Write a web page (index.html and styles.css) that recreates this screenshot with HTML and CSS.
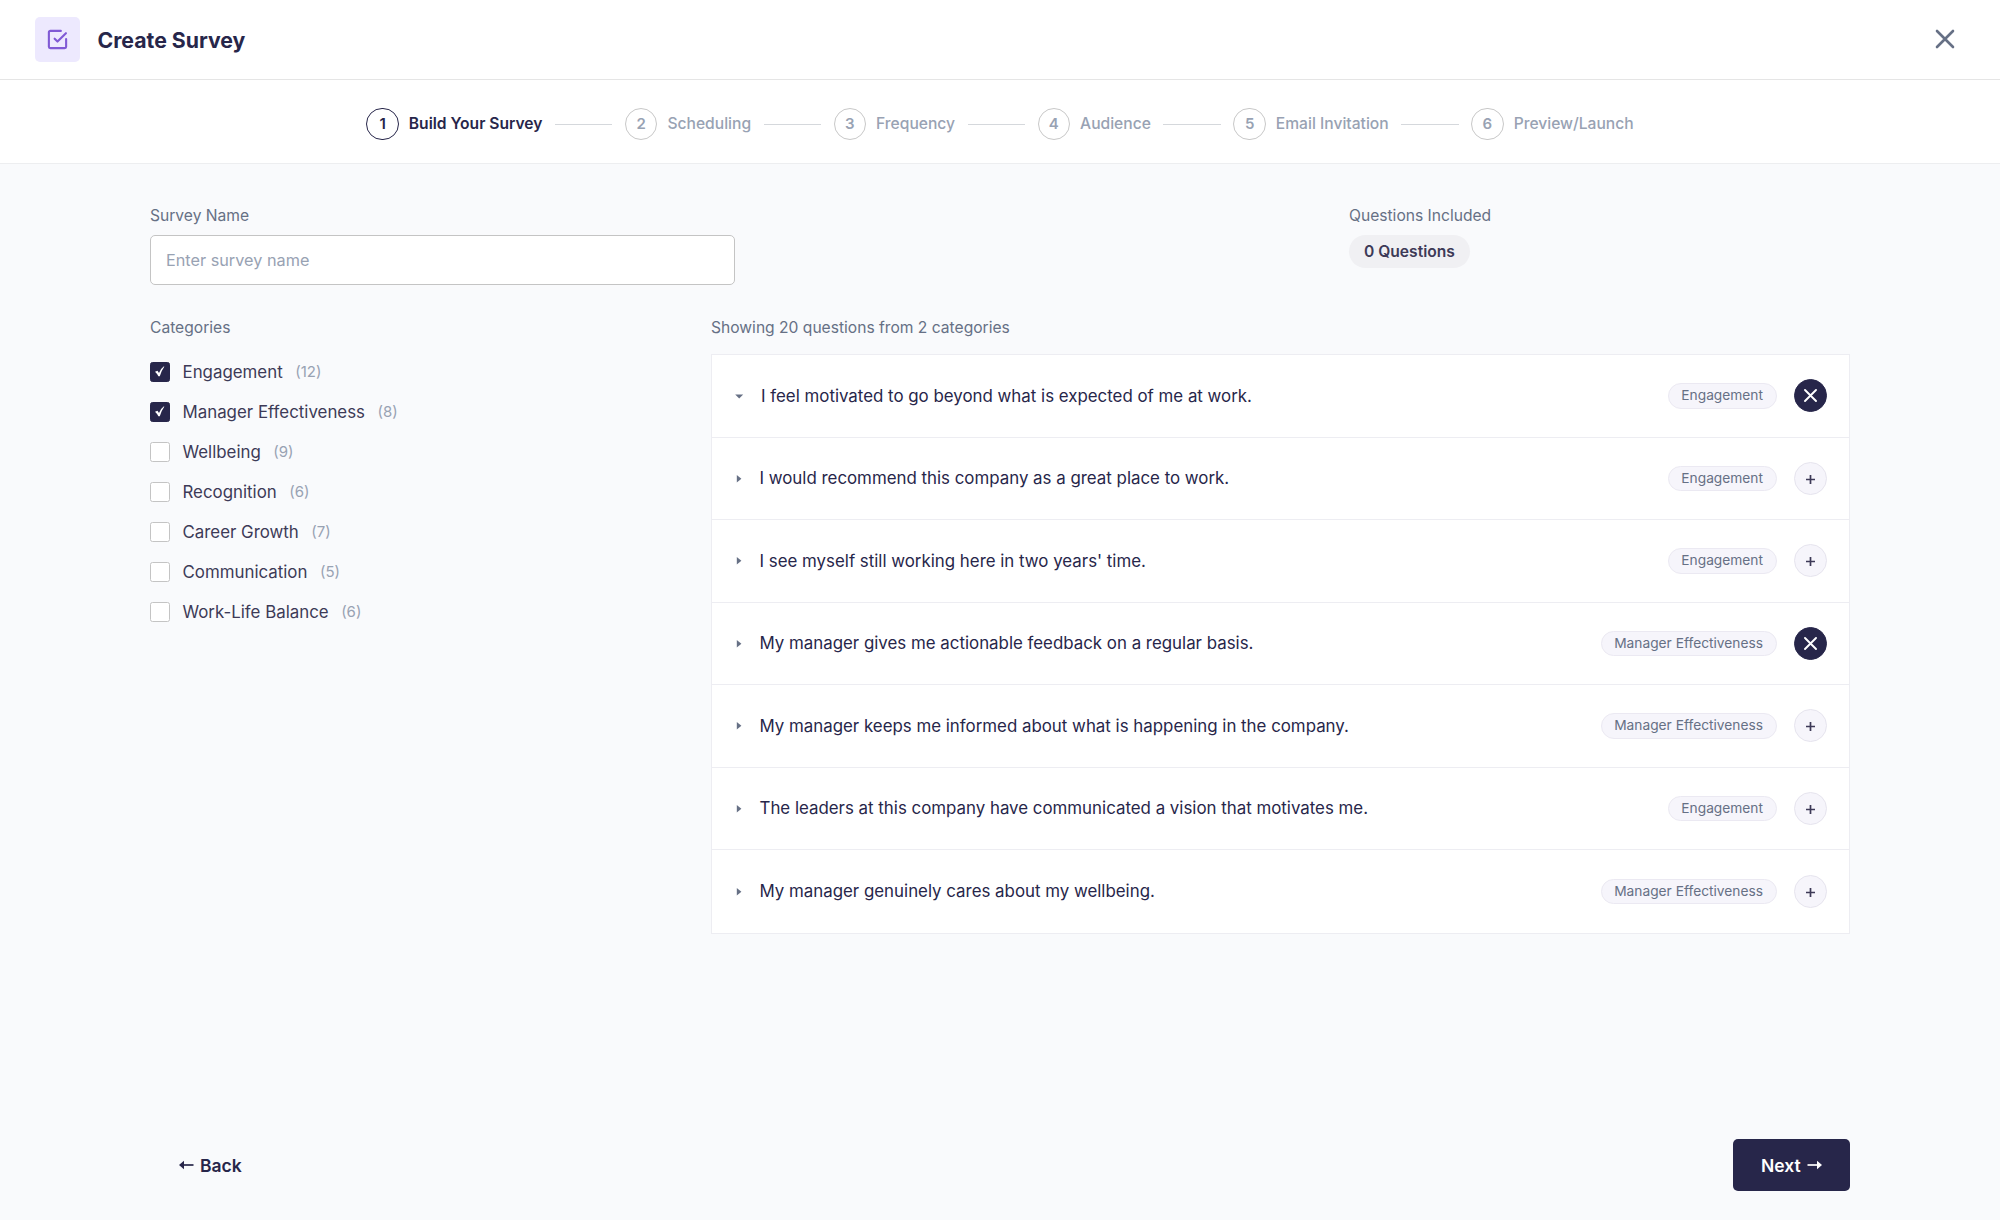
FILE: index.html
```html
<!DOCTYPE html>
<html lang="en">
<head>
<meta charset="UTF-8">
<meta name="viewport" content="width=device-width, initial-scale=1.0">
<title>Create Survey</title>
<link rel="stylesheet" href="styles.css">
</head>
<body>
<header class="header">
    <div class="header-icon">
        <svg width="23" height="23" viewBox="0 0 24 24" fill="none" stroke="currentColor" stroke-width="2.2" stroke-linecap="round" stroke-linejoin="round">
            <path d="M9 11.2l3 3L20.8 5.4"/>
            <path d="M21 11.5v8a1.5 1.5 0 0 1-1.5 1.5h-15A1.5 1.5 0 0 1 3 19.5v-15A1.5 1.5 0 0 1 4.5 3h11"/>
        </svg>
    </div>
    <h1 class="title">Create Survey</h1>
    <button class="close" aria-label="Close">
        <svg width="20" height="20" viewBox="0 0 20 20" fill="none" stroke="currentColor" stroke-width="2.6" stroke-linecap="round"><path d="M2 2l16 16M18 2L2 18"/></svg>
    </button>
</header>

<nav class="steps">
    <div class="step active"><span class="step-number">1</span><span class="step-name">Build Your Survey</span></div>
    <div class="step-line"></div>
    <div class="step"><span class="step-number">2</span><span class="step-name">Scheduling</span></div>
    <div class="step-line"></div>
    <div class="step"><span class="step-number">3</span><span class="step-name">Frequency</span></div>
    <div class="step-line"></div>
    <div class="step"><span class="step-number">4</span><span class="step-name">Audience</span></div>
    <div class="step-line"></div>
    <div class="step"><span class="step-number">5</span><span class="step-name">Email Invitation</span></div>
    <div class="step-line"></div>
    <div class="step"><span class="step-number">6</span><span class="step-name">Preview/Launch</span></div>
</nav>

<main class="content">
    <div class="top-row">
        <div class="field">
            <label class="label" for="surveyName">Survey Name</label>
            <input class="input" type="text" id="surveyName" placeholder="Enter survey name">
        </div>
        <div class="included">
            <div class="label">Questions Included</div>
            <span class="included-count">0 Questions</span>
        </div>
    </div>

    <div class="columns">
        <aside class="sidebar">
            <div class="label">Categories</div>
            <div class="categories" id="categories"></div>
        </aside>
        <section class="questions-column">
            <div class="label">Showing 20 questions from 2 categories</div>
            <div class="questions" id="questions"></div>
        </section>
    </div>
</main>

<footer class="footer">
    <button class="button back">
        <svg width="15" height="10" viewBox="0 0 15 10"><path d="M4 5h10.5" stroke="currentColor" stroke-width="1.7"/><path d="M0 5l5-4.2v8.4z" fill="currentColor"/></svg>
        Back
    </button>
    <button class="button next">
        Next
        <svg width="15" height="10" viewBox="0 0 15 10"><path d="M.5 5H11" stroke="currentColor" stroke-width="1.7"/><path d="M15 5l-5-4.200v8.400z" fill="currentColor"/></svg>
    </button>
</footer>

<script src="script.js"></script>
</body>
</html>
```

FILE: styles.css
```css
* {
    box-sizing: border-box;
}

body {
    margin: 0;
    height: 100vh;
    display: flex;
    flex-direction: column;
    font-family: Inter, "Liberation Sans", sans-serif;
    font-size: 16.875px;
    color: #27264a;
    background-color: #f9fafc;
}

button {
    font-family: inherit;
    border: none;
    padding: 0;
    cursor: pointer;
}

.header {
    display: flex;
    align-items: center;
    height: 80px;
    padding: 0 45px 1px 35px;
    background-color: #fff;
    border-bottom: 1px solid #e5e5e5;
}

.header-icon {
    display: flex;
    align-items: center;
    justify-content: center;
    width: 45px;
    height: 45px;
    border-radius: 5px;
    background-color: #ede9fe;
    color: #805ad5;
}

.title {
    margin: 2px 0 0 17.5px;
    font-size: 21.25px;
    font-weight: 700;
}

.close {
    display: flex;
    margin-left: auto;
    background: none;
    color: #667085;
}

.steps {
    display: flex;
    align-items: center;
    justify-content: center;
    gap: 12.5px;
    height: 84px;
    padding-top: 5px;
    background-color: #fff;
    border-bottom: 1px solid #edeef0;
}

.step {
    display: flex;
    align-items: center;
    gap: 10px;
    font-size: 15.625px;
    font-weight: 500;
    color: #98a2b3;
}

.step-number {
    display: flex;
    align-items: center;
    justify-content: center;
    width: 32.5px;
    height: 32.5px;
    padding-bottom: 1px;
    border: 1px solid #c8c8c8;
    border-radius: 50%;
    font-size: 15px;
    font-weight: 600;
}

.step-name {
    padding-bottom: 1px;
}

.step.active {
    font-weight: 600;
    color: #27264a;
}

.step.active .step-number {
    border-color: #27264a;
}

.step-line {
    width: 57.5px;
    height: 1px;
    background-color: #d5d8dc;
}

.content {
    padding: 42px 150px 0;
}

.label {
    display: block;
    font-size: 15.625px;
    line-height: 20px;
    color: #667085;
}

.top-row {
    display: flex;
    justify-content: space-between;
}

.field {
    width: 585px;
}

.input {
    display: block;
    width: 100%;
    height: 50px;
    margin-top: 9px;
    padding: 0 15px;
    border: 1px solid #c4c4c4;
    border-radius: 5px;
    background-color: #fff;
    font-family: inherit;
    font-size: 16.25px;
}

.input::placeholder {
    color: #98a2b3;
}

.included {
    width: 501px;
}

.included-count {
    display: inline-block;
    margin-top: 9px;
    padding: 0 15px;
    border-radius: 17px;
    background-color: #f0f0f3;
    font-size: 15.625px;
    font-weight: 600;
    line-height: 33px;
    color: #3d3a57;
}

.columns {
    display: flex;
    margin-top: 33px;
}

.sidebar {
    width: 561px;
}

.categories {
    display: flex;
    flex-direction: column;
    gap: 20px;
    margin-top: 24px;
}

.category {
    display: flex;
    align-items: center;
    height: 20px;
    color: #3d3a57;
}

.checkbox {
    display: flex;
    align-items: center;
    justify-content: center;
    width: 20px;
    height: 20px;
    margin-right: 12.5px;
    border: 1px solid #c4c4c4;
    border-radius: 2.5px;
    background-color: #fff;
}

.checkbox svg {
    flex-shrink: 0;
}

.checkbox.checked {
    border-color: #27264a;
    background-color: #27264a;
    color: #fff;
}

.category-count {
    margin-left: 12.5px;
    padding-bottom: 1px;
    font-size: 15px;
    color: #98a2b3;
}

.questions-column {
    flex: 1;
}

.questions {
    margin-top: 16px;
    border: 1px solid #ededf2;
    background-color: #fff;
}

.question {
    display: flex;
    align-items: center;
    height: 82.5px;
    padding: 0 22.5px;
    border-bottom: 1px solid #ededf2;
}

.question:last-child {
    border-bottom: none;
}

.arrow {
    width: 9px;
    height: 9px;
    margin-right: 16px;
    color: #667085;
}

.arrow.open {
    margin-right: 17.5px;
}

.question-text {
    flex: 1;
}

.tag {
    padding: 0 12.5px;
    border: 1px solid #ebe9f2;
    border-radius: 13px;
    background-color: #f6f5fb;
    font-size: 13.75px;
    line-height: 23.5px;
    color: #667085;
}

.toggle {
    display: flex;
    align-items: center;
    justify-content: center;
    width: 33px;
    height: 33px;
    margin-left: 17px;
    padding-top: 2px;
    border: 1px solid #e6e4ee;
    border-radius: 50%;
    background-color: #f6f5fb;
    color: #3d3a57;
}

.toggle.selected {
    padding-top: 0;
    border-color: #27264a;
    background-color: #27264a;
    color: #fff;
}

.footer {
    display: flex;
    align-items: center;
    justify-content: space-between;
    margin-top: auto;
    padding: 0 150px 29px;
}

.button {
    display: flex;
    align-items: center;
    gap: 6px;
    height: 52px;
    padding: 0 28px 0 29px;
    border-radius: 5px;
    font-size: 17.5px;
    font-weight: 600;
}

.back {
    background: none;
    color: #27264a;
}

.next {
    width: 117px;
    padding: 0 28px;
    background-color: #27264a;
    color: #fff;
}
```

FILE: script.js
```js
const categories = [
    { name: 'Engagement', count: 12, checked: true },
    { name: 'Manager Effectiveness', count: 8, checked: true },
    { name: 'Wellbeing', count: 9 },
    { name: 'Recognition', count: 6 },
    { name: 'Career Growth', count: 7 },
    { name: 'Communication', count: 5 },
    { name: 'Work-Life Balance', count: 6 }
];

const questions = [
    { text: 'I feel motivated to go beyond what is expected of me at work.', tag: 'Engagement', open: true, selected: true },
    { text: 'I would recommend this company as a great place to work.', tag: 'Engagement' },
    { text: "I see myself still working here in two years' time.", tag: 'Engagement' },
    { text: 'My manager gives me actionable feedback on a regular basis.', tag: 'Manager Effectiveness', selected: true },
    { text: 'My manager keeps me informed about what is happening in the company.', tag: 'Manager Effectiveness' },
    { text: 'The leaders at this company have communicated a vision that motivates me.', tag: 'Engagement' },
    { text: 'My manager genuinely cares about my wellbeing.', tag: 'Manager Effectiveness' }
];

const checkIcon = '<svg width="20" height="20" viewBox="0 0 20 20"><path d="M5 9.8L7.5 8.8L9 11Q10.8 6.4 14.2 4L14 5.2Q11.2 8.8 9.8 14.3H8.4Q7 11.6 5 9.8Z" fill="currentColor"/></svg>';
const crossIcon = '<svg width="13" height="13" viewBox="0 0 13 13" fill="none" stroke="currentColor" stroke-width="1.9" stroke-linecap="round"><path d="M1 1l11 11M12 1L1 12"/></svg>';
const plusIcon = '<svg width="9" height="9" viewBox="0 0 9 9" fill="none" stroke="currentColor" stroke-width="1.7"><path d="M4.5 0v9M0 4.5h9"/></svg>';

document.getElementById('categories').innerHTML = categories.map(c => `
    <div class="category">
        <span class="checkbox ${c.checked ? 'checked' : ''}">${c.checked ? checkIcon : ''}</span>
        <span>${c.name}</span>
        <span class="category-count">(${c.count})</span>
    </div>`).join('');

document.getElementById('questions').innerHTML = questions.map(q => `
    <div class="question">
        <svg class="arrow ${q.open ? 'open' : ''}" viewBox="0 0 9 9"><path d="${q.open ? 'M.2 3.5h8l-4 4z' : 'M1.8 1v7.5l4.6-3.7z'}" fill="currentColor"/></svg>
        <span class="question-text">${q.text}</span>
        <span class="tag">${q.tag}</span>
        <button class="toggle ${q.selected ? 'selected' : ''}">${q.selected ? crossIcon : plusIcon}</button>
    </div>`).join('');
```
